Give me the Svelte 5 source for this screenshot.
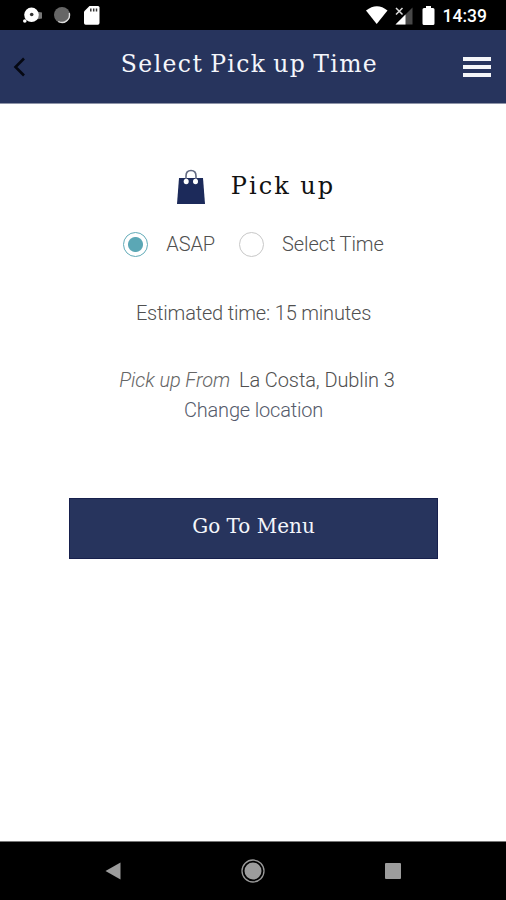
<script>
    let pickup = $state('asap');

    const options = [
        { value: 'asap', label: 'ASAP' },
        { value: 'later', label: 'Select Time' }
    ];
</script>

<div class="screen">
    <div class="status">
        <svg width="506" height="30" viewBox="0 0 506 30">
            <!-- notifications -->
            <path d="M36 11.5l6 1v6l-6 1z" fill="#777" />
            <circle cx="31.5" cy="14.8" r="7.3" fill="#fff" />
            <circle cx="31.7" cy="14.5" r="1.8" fill="#333" />
            <circle cx="24.8" cy="21" r="1.8" fill="#fff" />
            <circle cx="62" cy="15" r="8" fill="#666" />
            <path d="M69.3 13a7.6 7.6 0 0 1-11 8.5" fill="none" stroke="#ddd" stroke-width="1.4" />
            <path d="M89.5 6H98q1.500 0 1.500 1.500V23q0 1.700-1.700 1.700H85.700Q84 24.700 84 23V11.500z" fill="#fff" />
            <path d="M90.800 8.500v3M93.700 8.500v3M96.500 8.500v3" stroke="#333" stroke-width="1.500" />
            <!-- wifi, signal, battery -->
            <path d="M366 10.500Q377 2 387.500 10.500L376.700 24z" fill="#fff" />
            <path d="M412.500 7.500V24.500H395.500z" fill="#484848" />
            <path d="M405.500 14.500v10h-10z" fill="#fff" />
            <path d="M396 8l6.500 6.500M402.500 8L396 14.500" stroke="#ddd" stroke-width="1.500" />
            <path d="M426 6h5v2h2q1.500 0 1.500 1.500v14q0 1.500-1.500 1.500h-9q-1.500 0-1.500-1.500v-14q0-1.500 1.500-1.500h2z" fill="#fff" />
        </svg>
        <span class="clock">14:39</span>
    </div>

    <header>
        <button class="back" aria-label="Back">
            <svg width="14" height="20" viewBox="0 0 14 20">
                <path d="M12 1.500L3.500 10l8.500 8.500" fill="none" stroke="#050812" stroke-width="2.600" />
            </svg>
        </button>
        <h1>Select Pick up Time</h1>
        <button class="menu" aria-label="Menu">
            <span></span>
            <span></span>
            <span></span>
        </button>
    </header>

    <main>
        <div class="heading">
            <svg width="28" height="36" viewBox="0 0 28 36">
                <path d="M2 9h24l2 26H0z" fill="#1c2a5a" />
                <path d="M9 12V7q0-5.500 5-5.500t5 5.500v5" fill="none" stroke="#626a82" stroke-width="1.600" />
                <ellipse cx="9.200" cy="12.500" rx="2.500" ry="2.700" fill="#fff" />
                <ellipse cx="18.500" cy="12.500" rx="2.500" ry="2.700" fill="#fff" />
            </svg>
            <h2>Pick up</h2>
        </div>

        <div class="options">
            {#each options as option}
                <label>
                    <input type="radio" bind:group={pickup} value={option.value} />
                    <span class="radio"></span>
                    <span class="label">{option.label}</span>
                </label>
            {/each}
        </div>

        <p class="estimate">Estimated time: 15 minutes</p>
        <p class="location"><em>Pick up From</em><span>La Costa, Dublin 3</span></p>
        <p class="change">Change location</p>

        <button class="go"><span>Go To Menu</span></button>
    </main>

    <nav>
        <svg width="16" height="18" viewBox="0 0 16 18"><path d="M15.500 0.500v17L0.500 9z" fill="#9c9c9c" /></svg>
        <svg width="24" height="24" viewBox="0 0 24 24">
            <circle cx="12" cy="12" r="11" fill="none" stroke="#999" stroke-width="1.300" />
            <circle cx="12" cy="12" r="8.500" fill="#9c9c9c" />
        </svg>
        <svg width="16" height="16" viewBox="0 0 16 16"><rect width="16" height="16" rx="1" fill="#9c9c9c" /></svg>
    </nav>
</div>

<style>
    :global(body) {
        margin: 0;
        background: #fff;
    }
    .screen {
        display: flex;
        flex-direction: column;
        width: 506px;
        height: 900px;
        background: #fff;
        font-family: Roboto, sans-serif;
        font-weight: 300;
        color: #505050;
        overflow: hidden;
    }
    h1, h2, p {
        margin: 0;
    }
    button {
        border: 0;
        padding: 0;
        background: none;
    }
    .status {
        display: grid;
        height: 30px;
        background: #000;
    }
    .status svg, .clock {
        grid-area: 1 / 1;
    }
    .clock {
        justify-self: end;
        margin-right: 19px;
        color: #fff;
        font-size: 17.5px;
        font-weight: 500;
        line-height: 32px;
    }
    header {
        display: flex;
        align-items: center;
        justify-content: space-between;
        box-sizing: border-box;
        height: 74px;
        padding: 0 15px 0 12px;
        background: #27345d;
        border-bottom: 1px solid #8e94a8;
    }
    .back, .menu {
        width: 28px;
        text-align: left;
    }
    .back svg {
        display: block;
    }
    .menu {
        display: flex;
        flex-direction: column;
        gap: 4px;
    }
    .menu span {
        height: 4px;
        background: #f4f5f8;
    }
    h1, h2, .go {
        font-family: "DejaVu Serif", serif;
        font-weight: 400;
    }
    h1 {
        margin-top: -6px;
        margin-right: 4px;
        color: #f4f6fb;
        font-size: 23.5px;
        letter-spacing: 1.4px;
        word-spacing: -2px;
        white-space: nowrap;
    }
    main {
        display: flex;
        flex-direction: column;
        align-items: center;
        flex: 1;
        font-size: 20px;
        line-height: 30px;
        letter-spacing: -0.1px;
    }
    .heading {
        display: flex;
        align-items: center;
        gap: 26px;
        margin-top: 65px;
        margin-left: 6px;
        height: 36px;
    }
    h2 {
        margin-top: -3px;
        color: #111;
        font-size: 24px;
        letter-spacing: 2px;
    }
    .options {
        display: flex;
        gap: 24px;
        margin-top: 24px;
        margin-left: 14px;
        margin-right: 13px;
    }
    label {
        display: flex;
        align-items: center;
    }
    input {
        display: none;
    }
    .radio {
        box-sizing: border-box;
        width: 25px;
        height: 25px;
        margin-right: 18px;
        border: 1px solid #c8c8c8;
        border-radius: 50%;
    }
    input:checked + .radio {
        border: 1.5px solid #62abb8;
        background: radial-gradient(circle, #5ba7b5 7px, #fff 8px);
    }
    .estimate {
        margin-top: 39px;
        margin-left: 1px;
        letter-spacing: -0.18px;
    }
    .location {
        margin-top: 37px;
        margin-left: 8px;
    }
    .location em {
        margin-right: 9px;
        color: #666;
    }
    .change {
        margin-left: 1px;
        color: #555b6b;
        letter-spacing: -0.18px;
    }
    .go {
        box-sizing: border-box;
        width: 369px;
        height: 61px;
        margin-top: 73px;
        margin-left: 1px;
        padding-bottom: 6px;
        border: 1px solid #17204d;
        background: #27345d;
        color: #f4f6fb;
        font-size: 20px;
    }
    nav {
        display: flex;
        align-items: center;
        justify-content: space-between;
        box-sizing: border-box;
        height: 59px;
        padding: 0 105px;
        border-top: 1px solid #777;
        background: #000;
    }
</style>
